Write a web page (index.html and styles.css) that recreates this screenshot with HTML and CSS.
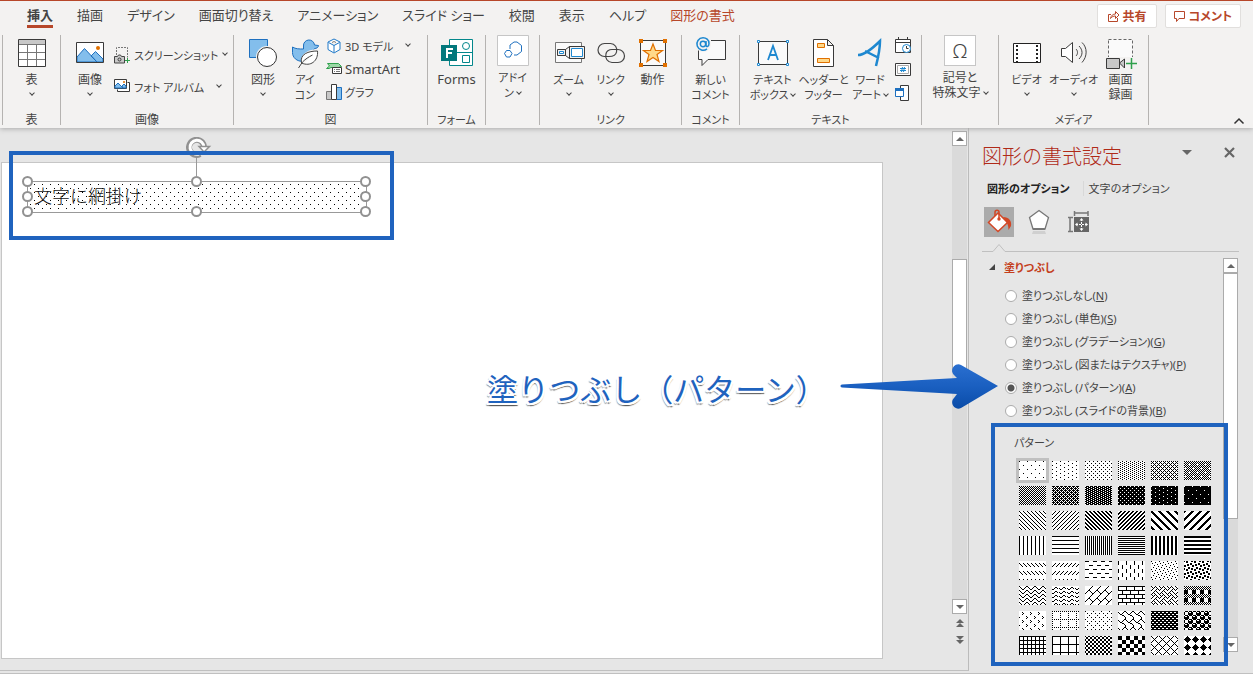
FILE: index.html
```html
<!DOCTYPE html>
<html lang="ja">
<head>
<meta charset="utf-8">
<title>図形の書式設定</title>
<link rel="stylesheet" href="styles.css">
</head>
<body>
<header class="ribbon">
  <div class="tabbar">
    <nav class="tabs">
      <button class="tab tab-active">挿入</button>
      <button class="tab">描画</button>
      <button class="tab">デザイン</button>
      <button class="tab">画面切り替え</button>
      <button class="tab">アニメーション</button>
      <button class="tab">スライド ショー</button>
      <button class="tab">校閲</button>
      <button class="tab">表示</button>
      <button class="tab">ヘルプ</button>
      <button class="tab tab-context">図形の書式</button>
    </nav>
    <div class="actions">
      <button class="action"><svg width="13" height="13" viewBox="0 0 13 13"><path d="M4 4.500H1.500v7h9V8M3.500 8.500c.5-3 2.500-4.500 5-4.500V1.500l3.500 3.500-3.500 3.500V6c-2 0-3.500.5-5 2.500z"/></svg>共有</button>
      <button class="action"><svg width="13" height="13" viewBox="0 0 13 13"><path d="M1.500 1.500h10v7H6l-2.500 3v-3h-2z"/></svg>コメント</button>
    </div>
  </div>

  <div class="groups">
    <section class="group g-table">
      <div class="items">
        <button class="big"><svg class="ico" viewBox="0 0 32 32"><path fill="#fff" d="M2.500 2.500h27v27h-27z"/><path fill="#c8c8c8" d="M3 3h26v4H3z"/><path class="g" d="M3 7.500h26M3 15.500h26M3 22.500h26M11.500 8v21M20.500 8v21"/><path class="k" d="M2.500 2.500h27v27h-27z"/></svg><span>表</span><i class="chev"></i></button>
      </div>
      <h2>表</h2>
    </section>

    <section class="group g-image">
      <div class="items">
        <button class="big"><svg class="ico" viewBox="0 0 32 32"><path fill="#fff" d="M2.500 5.500h27v20h-27z"/><path fill="#83beec" stroke="#1e70bf" d="M3 20l7.500-8.500L23 25H3zM17 19l4.500-4.500L29 22v3h-6z"/><circle cx="24" cy="11" r="2" fill="#e07000"/><path class="k" d="M2.500 5.500h27v20h-27z"/></svg><span>画像</span><i class="chev"></i></button>
        <div class="stack stack-two">
          <button class="small kana"><svg width="17" height="17" viewBox="0 0 17 17"><path class="g" stroke-dasharray="2 1" d="M2.500 8V.500h11v10"/><path fill="#c8c8c8" stroke="#444" d="M.500 9.500h3l1-1.500h2l1 1.500h3v6.500h-10z"/><circle cx="5.500" cy="12.500" r="1.500" class="k"/><path stroke="#2fa04c" d="M11 13.500h5M13.500 11v5"/></svg><span>スクリーンショット</span><i class="chev"></i></button>
          <button class="small kana"><svg width="17" height="17" viewBox="0 0 17 17"><path fill="#fff" class="k" d="M13.500 3.500h2v9h-12v-2"/><path fill="#fff" class="k" d="M.500.500h12v9H.500z"/><path fill="#83beec" stroke="#1e70bf" d="M1 7l3-3 5 5H1zM8 7l2-2 2 2v2H9z"/><circle cx="10" cy="3" r="1" fill="#e07000"/></svg><span>フォト アルバム</span><i class="chev chev-far"></i></button>
        </div>
      </div>
      <h2>画像</h2>
    </section>

    <section class="group g-illust">
      <div class="items">
        <button class="big"><svg class="ico" viewBox="0 0 32 32"><path fill="#83beec" stroke="#1e70bf" d="M2.500 2.500h18v18h-18z"/><circle cx="20" cy="20" r="11" fill="#f3f2f1"/><circle cx="20" cy="20" r="9.500" fill="#fff" stroke="#333"/></svg><span>図形</span><i class="chev"></i></button>
        <button class="big kana"><svg class="ico" viewBox="0 0 32 32"><path fill="#83beec" stroke="#1e70bf" d="M3.500 10c3 2 7 2 11 2V9a5.500 5.500 0 0 1 11-1l4 .5c0 2-2 3-4 3l-3 5-8 8c-7 0-11-4-11-9z"/><path fill="#f3f2f1" d="M30 12c-10 0-19 4-18 14l-2 5h4c9 2 17-4 16-19z"/><path fill="#fff" stroke="#444" d="M28.500 14c-9 0-18 3-16 12 9 4 17-2 16-12zM9.500 31l4-6c3-3 6-5 10-7"/></svg><span>アイ<br>コン</span></button>
        <div class="stack">
          <button class="small kana"><svg width="16" height="16" viewBox="0 0 16 16"><path fill="#fff" stroke="#1e78c8" d="M8 1l6 3v7.500L8 15l-6-3.500V4zM2.500 4.500L8 7.500l5.500-3M8 7.500V14"/><path class="g" d="M6 4.500l2-1 2 1"/></svg><span>3D モデル</span><i class="chev chev-far"></i></button>
          <button class="small latin"><svg width="16" height="16" viewBox="0 0 16 16"><path fill="#9bd8a6" stroke="#2fa04c" d="M1.500 2.500h11l3 3-3 1H5l-2 1H.500l3-2.500z"/><path fill="#fff" class="k" d="M6.500 6.500h9v6h-9z"/><path class="g" d="M8 8.500h1m1 0h4M8 10.500h1m1 0h4"/></svg><span>SmartArt</span></button>
          <button class="small kana"><svg width="16" height="16" viewBox="0 0 16 16"><path fill="#c8c8c8" class="g" d="M.500 7.500h5v8h-5z"/><path fill="#83beec" stroke="#1e70bf" d="M10.500 3.500h5v12h-5z"/><path fill="#fff" class="k" d="M5.500.500h5v15h-5z"/></svg><span>グラフ</span></button>
        </div>
      </div>
      <h2>図</h2>
    </section>

    <section class="group g-forms">
      <div class="items">
        <button class="big latin"><svg class="ico ico-wide" viewBox="0 0 34 32"><path fill="#fff" stroke="#03878b" d="M9.500 2.500h23v26h-23zM9.500 15.500h23"/><circle cx="26" cy="9" r="3.500" fill="none" stroke="#03878b"/><path fill="none" stroke="#03878b" d="M22.500 18.500h7v7h-7z"/><path fill="#03787c" d="M1 8h16v16H1z"/><path stroke="#fff" stroke-width="2" fill="none" d="M7 21v-9h6M7 16h5"/></svg><span>Forms</span></button>
      </div>
      <h2 class="kana">フォーム</h2>
    </section>

    <section class="group g-addin">
      <div class="items">
        <button class="big kana"><svg class="tile" viewBox="0 0 32 31"><path fill="#fff" stroke="#c6c6c6" d="M.500.500h31v30H.500z"/><path fill="none" stroke="#1e70bf" d="M13 14V10l4-3h3l4.500 3.500v6L20 20h-3"/><path fill="none" stroke="#1e70bf" d="M9.500 15.500h3.500l2 3-2 3.500H9.500l-2-3.500z"/></svg><span>アドイ<br>ン <i class="chev"></i></span></button>
      </div>
    </section>

    <section class="group g-link">
      <div class="items">
        <button class="big kana"><svg class="ico" viewBox="0 0 32 32"><path fill="#fafafa" class="g" d="M2.500 5.500h26v20h-26z"/><path fill="#f3f2f1" class="k" d="M4.500 12.500v6h8v-6zM12.500 12.500l4-3v12l-4-3zM16.500 9.500h15v12h-15z"/><path fill="#fff" stroke="#1e88d0" d="M18.500 11.500h11v8h-11z"/><path fill="#fff" stroke="#1e88d0" d="M6.500 14.500h4v2h-4z"/></svg><span>ズーム</span><i class="chev"></i></button>
        <button class="big kana"><svg class="ico" viewBox="0 0 32 32"><g fill="none" stroke="#444" stroke-width="1.200"><path d="M14 19.500H9.500a6.500 6.500 0 0 1 0-13h6a6.500 6.500 0 0 1 6 8.500"/><path d="M17 12.500h6a6.500 6.500 0 0 1 0 13h-6a6.500 6.500 0 0 1-6-8.500M14 19.500c4 0 7-2 7.500-4.500M17 12.500c-3 0-6 2-6 4.500"/></g></svg><span>リンク</span><i class="chev"></i></button>
        <button class="big"><svg class="ico" viewBox="0 0 32 32"><path class="k" fill="#fafafa" d="M3.500 3.500h25v25h-25z"/><path fill="#ffd98a" stroke="#e07000" stroke-width="1.200" d="M16 7l2.500 6.500h7l-5.500 4 2 7-6-4-6 4 2-7-5.500-4h7z"/><path fill="#e07000" d="M2 2h4v4H2zM26 2h4v4h-4zM2 26h4v4H2zM26 26h4v4h-4z"/></svg><span>動作</span></button>
      </div>
      <h2 class="kana">リンク</h2>
    </section>

    <section class="group g-comment">
      <div class="items">
        <button class="big kana"><svg class="ico" viewBox="0 0 32 32"><path fill="#fafafa" class="k" d="M16 3.500h14.500v19H13l-6 6v-6H3.500V12"/><circle cx="8" cy="7" r="8" fill="#f3f2f1"/><circle cx="8" cy="7" r="2.700" fill="none" stroke="#1e88d0" stroke-width="1.500"/><path fill="none" stroke="#1e88d0" stroke-width="1.500" d="M11 4v4.500c.5 2 3 1 3-2C14 2.500 11 .8 8 .8a6.200 6.200 0 1 0 4 11"/></svg><span>新しい<br>コメント</span></button>
      </div>
      <h2 class="kana">コメント</h2>
    </section>

    <section class="group g-text">
      <div class="items">
        <button class="big kana"><svg class="ico" viewBox="0 0 32 32"><path fill="#fafafa" class="k" d="M1.500 4.500h29v23h-29z"/><path fill="none" stroke="#1e88d0" stroke-width="1.800" d="M11 23l5-14 5 14M13 18h6"/><path fill="#fff" stroke="#1e88d0" d="M.500 3.500h2v2h-2zM29.500 3.500h2v2h-2zM.500 26.500h2v2h-2zM29.500 26.500h2v2h-2z"/></svg><span>テキスト<br>ボックス <i class="chev"></i></span></button>
        <button class="big kana"><svg class="ico" viewBox="0 0 32 32"><path fill="#fff" class="k" d="M5.500 2.500h14l6 6v21h-20zM19.500 2.500v6h6"/><path fill="#ffd98a" stroke="#e07000" d="M9.500 6.500h7v4h-7zM9.500 21.500h12v4h-12z"/></svg><span>ヘッダーと<br>フッター</span></button>
        <button class="big kana"><svg class="ico" viewBox="0 0 32 32"><path fill="none" stroke="#1e88d0" stroke-width="2.500" d="M4 18c7 0 15-7 22-14 0 9-2 17-4 25M11 14l14 7"/></svg><span>ワード<br>アート <i class="chev"></i></span></button>
        <div class="stack stack-icons">
          <button class="small" aria-label="日付と時刻"><svg width="17" height="17" viewBox="0 0 17 17"><path fill="#fff" class="k" d="M.500 2.500h15v13H.500zM.500 5.500h15M3.500 0v3M12.500 0v3"/><circle cx="11.500" cy="11.500" r="4" fill="#fff" stroke="#1e88d0"/><path class="k" d="M11.500 9v2.500h2"/></svg></button>
          <button class="small" aria-label="スライド番号"><svg width="17" height="17" viewBox="0 0 17 17"><path fill="#fff" class="k" d="M.500 2.500h15v12H.500z"/><path fill="none" stroke="#aaa" d="M2.500 4.500h11v8h-11z"/><path stroke="#1e88d0" d="M5 7.500h6M5 9.500h6M7.500 6l-1 5M9.500 6l-1 5"/></svg></button>
          <button class="small" aria-label="オブジェクト"><svg width="17" height="17" viewBox="0 0 17 17"><path fill="#fff" class="k" d="M5.500 3V.500h8v15h-8V12"/><path fill="#fff" stroke="#1e70bf" d="M.500 3.500h8v8h-8z"/><path fill="#1e70bf" d="M0 3h9v3H0z"/></svg></button>
        </div>
      </div>
      <h2 class="kana">テキスト</h2>
    </section>

    <section class="group g-symbol">
      <div class="items">
        <button class="big"><span class="tile omega">Ω</span><span>記号と<br>特殊文字 <i class="chev"></i></span></button>
      </div>
    </section>

    <section class="group g-media">
      <div class="items">
        <button class="big kana"><svg class="ico" viewBox="0 0 32 32"><path fill="#fff" stroke="#222" d="M2.500 6.500h27v19h-27z"/><path fill="none" stroke="#222" stroke-width="2" stroke-dasharray="2 2" d="M6 8v17M26 8v17"/></svg><span>ビデオ</span><i class="chev"></i></button>
        <button class="big kana"><svg class="ico" viewBox="0 0 32 32"><path fill="#fff" class="k" d="M3.500 11.500h4l7-6v20l-7-6h-4z"/><path fill="none" stroke="#444" d="M18 12c2 2 2 5 0 7M21 9c4 4 4 9 0 13M24 5.500c5.500 5 5.500 14 0 20"/></svg><span>オーディオ</span><i class="chev"></i></button>
        <button class="big"><svg class="ico" viewBox="0 0 32 32"><path fill="#fafafa" stroke="#666" stroke-dasharray="3 2" d="M3.500 2.500h24v18h-24z"/><path fill="#f3f2f1" d="M0 20h32v12H0z"/><path fill="#c8c8c8" class="k" d="M1.500 21.500h13v10h-13zM14.500 26l5-4v9z"/><path stroke="#2fa04c" stroke-width="1.500" d="M21 26.500h11M26.500 21v11"/></svg><span>画面<br>録画</span></button>
      </div>
      <h2 class="kana">メディア</h2>
    </section>

    <button class="collapse" aria-label="リボンを折りたたむ"><svg width="12" height="8" viewBox="0 0 12 8"><path fill="none" stroke="#333" stroke-width="1.500" d="M1.500 6.500L6 2l4.500 4.500"/></svg></button>
  </div>
</header>

<main class="workspace">
  <div class="canvas">
    <div class="slide">
      <div class="shape">
        <svg class="shape-fill"><defs><pattern id="dots" width="8" height="8" patternUnits="userSpaceOnUse"><path d="M6 2h1v1H6zM2 6h1v1H2z"/></pattern></defs><rect width="100%" height="100%" fill="url(#dots)"/></svg>
        <span class="shape-text">文字に網掛け</span>
        <i class="handle h-tl"></i><i class="handle h-t"></i><i class="handle h-tr"></i>
        <i class="handle h-l"></i><i class="handle h-r"></i>
        <i class="handle h-bl"></i><i class="handle h-b"></i><i class="handle h-br"></i>
        <svg class="rotate" width="26" height="46" viewBox="0 0 26 46"><path stroke="#999" d="M10.500 19v22"/><path fill="none" stroke="#919191" stroke-width="6" d="M14 17a7.500 7.500 0 1 1 4-7"/><path fill="none" stroke="#fff" stroke-width="3" d="M13 17a7 7 0 1 1 5-6.500"/><path fill="#fff" stroke="#919191" stroke-width="1.500" d="M13 9.500h10.500L18 15z"/></svg>
      </div>
    </div>
    <div class="frame frame-shape"></div>
  </div>

  <div class="vscroll">
    <button class="sbtn" aria-label="上へ"><i class="up"></i></button>
    <div class="track"><div class="thumb"></div></div>
    <button class="sbtn" aria-label="下へ"><i class="down"></i></button>
    <button class="page" aria-label="前のスライド"><i class="up"></i><i class="up"></i></button>
    <button class="page" aria-label="次のスライド"><i class="down"></i><i class="down"></i></button>
  </div>

  <aside class="pane">
    <div class="pane-head">
      <h1>図形の書式設定</h1>
      <button class="pane-menu" aria-label="オプション"><i class="down"></i></button>
      <button class="pane-close" aria-label="閉じる"><svg width="11" height="11" viewBox="0 0 11 11"><path stroke="#666" stroke-width="2.200" d="M1 1l9 9M10 1l-9 9"/></svg></button>
    </div>
    <div class="pane-tabs">
      <button class="ptab ptab-active">図形のオプション</button>
      <button class="ptab">文字のオプション</button>
    </div>
    <div class="pane-icons">
      <button class="picon picon-active" aria-label="塗りつぶしと線"><svg width="30" height="30" viewBox="0 0 30 30"><path fill="#fff" stroke="#d24726" stroke-width="1.500" d="M14 6l9.500 9.500-9.500 9-9.500-9z"/><path fill="none" stroke="#d24726" stroke-width="1.500" d="M11 9V5c0-2.500 4-2.500 4 0v7"/><circle cx="15" cy="12" r="1.700" fill="#d24726"/><path fill="#d24726" d="M19 10c6 0 9 4 8 9l-2.500 4c0-5-1.500-8-5.500-13z"/></svg></button>
      <button class="picon" aria-label="効果"><svg width="30" height="30" viewBox="0 0 30 30"><path fill="#fff" stroke="#777" stroke-width="1.300" d="M15 3.500l9.500 7L21 22H9L5.500 10.500z"/><path fill="#777" d="M9 21h12v2H9z"/><path fill="#d0d0d0" d="M9 24h12l1 3H8z"/></svg></button>
      <button class="picon" aria-label="サイズとプロパティ"><svg width="30" height="30" viewBox="0 0 30 30"><path fill="none" stroke="#777" stroke-width="1.500" d="M10 6h14M10.500 4v5M24 4v5M6 11v14M4 10.500h5M4 24.500h5"/><path fill="#666" d="M10 10h15v15H10z"/><path stroke="#fff" fill="none" stroke-dasharray="2 1" d="M17.500 12v11M12 17.500h11"/><path fill="#fff" d="M17.500 11l2 2.500h-4zM17.500 24l2-2.500h-4zM11 17.500l2.500-2v4zM24 17.500l-2.500-2v4z"/></svg></button>
    </div>
    <svg class="notch" width="257" height="10" viewBox="0 0 257 10"><path fill="none" stroke="#c0c0c0" d="M0 8.500h11l6-7 6 7h234"/></svg>
    <div class="pane-body">
      <div class="pane-content">
        <h2 class="section-title"><i class="tri"></i>塗りつぶし</h2>
        <div class="radios">
          <label><input type="radio" name="fill"><span>塗りつぶしなし(<u>N</u>)</span></label>
          <label><input type="radio" name="fill"><span>塗りつぶし (単色)(<u>S</u>)</span></label>
          <label><input type="radio" name="fill"><span>塗りつぶし (グラデーション)(<u>G</u>)</span></label>
          <label><input type="radio" name="fill"><span>塗りつぶし (図またはテクスチャ)(<u>P</u>)</span></label>
          <label><input type="radio" name="fill" checked><span>塗りつぶし (パターン)(<u>A</u>)</span></label>
          <label><input type="radio" name="fill"><span>塗りつぶし (スライドの背景)(<u>B</u>)</span></label>
        </div>
        <div class="patterns">
          <h3>パターン</h3>
          <div class="swatches" id="swatches"></div>
          <div class="frame frame-patterns"></div>
        </div>
      </div>
      <div class="pscroll">
        <button class="sbtn" aria-label="上へ"><i class="up"></i></button>
        <div class="track"><div class="thumb"></div></div>
        <button class="sbtn" aria-label="下へ"><i class="down"></i></button>
      </div>
    </div>
  </aside>

  <p class="callout">塗りつぶし（パターン）</p>
  <svg class="arrow" width="160" height="52" viewBox="0 0 160 52"><defs><linearGradient id="blue" x1="0" y1="0" x2="0" y2="1"><stop offset="0" stop-color="#2a6fd0"/><stop offset=".5" stop-color="#1a5fc0"/><stop offset="1" stop-color="#0a4ca8"/></linearGradient></defs><path fill="url(#blue)" d="M2 21.500L117 15l-3-3c-5-5 1-13 7-10l37 21-37 22c-6 3-12-5-7-10l3-4L2 24.500c-2 0-2-3 0-3z"/></svg>
</main>
<script src="patterns.js"></script>
</body>
</html>
```

FILE: styles.css
```css
* { box-sizing: border-box; }

body {
  margin: 0;
  height: 100vh;
  display: flex;
  flex-direction: column;
  overflow: hidden;
  background: #e6e6e6;
  color: #444;
  font-family: "Noto Sans", "Noto Sans CJK JP", sans-serif;
  font-size: 12px;
  line-height: 15px;
  font-feature-settings: "palt";
}

h1, h2, h3, p { margin: 0; font-weight: 400; }

button {
  border: 0;
  padding: 0;
  background: none;
  color: inherit;
  font: inherit;
  font-feature-settings: inherit;
}

svg { display: block; flex: none; }
.k { stroke: #3a3a3a; }
.g { stroke: #777; }
path.k:not([fill]), path.g:not([fill]), circle.k { fill: none; }

/* Ribbon */
.ribbon {
  position: relative;
  z-index: 1;
  background: #f3f2f1;
  border-top: 1px solid #b7472a;
  box-shadow: 0 1px 5px #aaa;
}
.tabbar {
  display: flex;
  justify-content: space-between;
  padding: 3px 12px 0 27px;
  height: 34px;
}
.tabs { display: flex; gap: 24px; align-items: flex-start; }
.tab {
  height: 24px;
  font-size: 13px;
  line-height: 23px;
  border-bottom: 3px solid transparent;
  white-space: nowrap;
}
.tab-active { font-weight: 700; border-color: #b7472a; }
.tab-context { color: #b7472a; }
.actions { display: flex; gap: 8px; }
.action {
  display: flex;
  align-items: center;
  gap: 3px;
  height: 24px;
  padding: 0 8px 0 7px;
  background: #fff;
  border: 1px solid #e1dfdd;
  border-radius: 2px;
  color: #b7472a;
  font-size: 12px;
  font-weight: 700;
}
.action:first-child { padding: 0 9px; }
.action path { fill: none; stroke: #b7472a; }

.groups { display: flex; height: 93px; padding-left: 2px; }
.group {
  display: flex;
  flex-direction: column;
  flex: none;
  justify-content: space-between;
  height: 90px;
  border-right: 1px solid #b5b3b1;
}
.group:first-child { border-left: 1px solid #b5b3b1; }
.group h2 { text-align: center; font-size: 12px; line-height: 14px; margin-bottom: -2px; }
.items { display: flex; justify-content: center; }
.g-table { width: 59px; }
.g-image { width: 173px; }
.g-image .items { justify-content: flex-start; padding-left: 8px; }
.g-illust { width: 194px; }
.g-illust .items { justify-content: flex-start; padding-left: 8px; }
.g-forms { width: 58px; }
.g-addin { width: 54px; }
.g-link { width: 142px; }
.g-comment { width: 58px; }
.g-text { width: 182px; }
.g-text .items { justify-content: flex-start; padding-left: 7px; }
.g-symbol { width: 77px; }
.g-media { width: 150px; }

.big {
  display: flex;
  flex-direction: column;
  align-items: center;
  width: 42px;
  white-space: nowrap;
}
.kana, .group h2.kana { font-size: 11px; }
.latin { font-size: 13px; }
.ico { width: 32px; height: 32px; margin: 2px 0 3px; }
.ico-wide { width: 34px; }
.tile { width: 32px; height: 31px; margin-bottom: 4px; }
.omega {
  background: #fff;
  border: 1px solid #c6c6c6;
  font-size: 20px;
  font-weight: 300;
  line-height: 29px;
  text-align: center;
}
.chev {
  display: inline-block;
  width: 4px;
  height: 4px;
  border: solid #444;
  border-width: 0 1px 1px 0;
  transform: rotate(45deg);
  vertical-align: 3px;
}
.big > .chev { margin-top: 4px; }
.stack { display: flex; flex-direction: column; gap: 5px; padding-top: 2px; }
.stack-two { gap: 14px; padding: 11px 0 0 3px; }
.stack-icons { padding-left: 4px; gap: 6px; padding-top: 1px; }
.small {
  display: flex;
  align-items: center;
  gap: 3px;
  height: 18px;
  white-space: nowrap;
}
.small .chev { margin: 0 0 4px 2px; }
.small .chev-far { margin-left: 10px; }
.g-text .big { width: 51px; }
.g-text .big:nth-child(3) { width: 42px; }
.g-media .big { width: 47px; }
.collapse { margin-left: auto; align-self: flex-end; padding: 0 8px 3px 0; }

/* Editing area */
.workspace {
  position: relative;
  flex: 1;
  display: flex;
  min-height: 0;
  border-bottom: 1px solid #c0c0c0;
}
.canvas {
  position: relative;
  flex: 1;
  display: flex;
  margin-bottom: 2px;
  padding: 34px 69px 11px 1px;
  border-bottom: 1px solid #c0c0c0;
}
.slide { position: relative; flex: 1; background: #fff; border: 1px solid #c6c6c6; }
.shape {
  position: absolute;
  left: 25px;
  top: 18px;
  width: 340px;
  height: 32px;
  padding-left: 6px;
  border: 1px solid #999;
  color: #111;
  font-size: 18px;
  font-weight: 300;
  line-height: 28px;
}
.shape-fill { position: absolute; inset: 0; width: 100%; height: 100%; }
.shape-text { position: relative; font-feature-settings: normal; }
.handle {
  position: absolute;
  width: 11px;
  height: 11px;
  margin: -6px;
  background: #fff;
  border: 2px solid #919191;
  border-radius: 50%;
}
.h-tl, .h-t, .h-tr { top: 0; }
.h-l, .h-r { top: 50%; }
.h-bl, .h-b, .h-br { top: 100%; }
.h-tl, .h-l, .h-bl { left: 0; }
.h-t, .h-b { left: 50%; }
.h-tr, .h-r, .h-br { left: 100%; }
.rotate { position: absolute; left: 158px; top: -45px; }
.frame { position: absolute; border: 4px solid #1f63be; pointer-events: none; }
.frame-shape { left: 9px; top: 23px; width: 385px; height: 89px; }

/* Scroll bars */
.vscroll {
  display: flex;
  flex-direction: column;
  width: 17px;
  margin-bottom: 2px;
  padding: 3px 1px 22px 0;
  border-right: 1px solid #bbb;
  border-bottom: 1px solid #c0c0c0;
}
.sbtn {
  display: flex;
  align-items: center;
  justify-content: center;
  flex: none;
  height: 15px;
  background: #fff;
  border: 1px solid #ababab;
}
.track { flex: 1; background: #dadada; }
.thumb { background: #fff; border: 1px solid #ababab; }
.vscroll .track { padding-top: 113px; }
.vscroll .thumb { height: 113px; }
.up, .down { display: block; border: 4px solid transparent; }
.up { border-top: 0; border-bottom-color: #666; }
.down { border-bottom: 0; border-top-color: #666; }
.page { display: flex; flex-direction: column; align-items: center; padding-top: 5px; height: 17px; }

/* Format pane */
.pane { width: 284px; padding-left: 13px; display: flex; flex-direction: column; }
.pane-head { display: flex; align-items: flex-start; padding-right: 18px; height: 53px; }
.pane-head h1 {
  flex: 1;
  padding-top: 14px;
  color: #b02a18;
  font-size: 20px;
  font-weight: 300;
  line-height: 30px;
  font-feature-settings: normal;
}
.pane-menu { padding: 22px 32px 0 0; }
.pane-menu .down { border-width: 5px 5px 0; }
.pane-close { padding-top: 19px; }
.pane-tabs { display: flex; gap: 13px; padding-left: 5px; height: 26px; font-size: 11px; }
.ptab { height: 15px; }
.ptab + .ptab { padding-left: 5px; border-left: 1px solid #d8d8d8; }
.ptab-active { color: #222; font-weight: 700; }
.pane-icons { display: flex; gap: 10px; padding-left: 2px; }
.picon { width: 30px; height: 30px; }
.picon-active { background: #ababab; }
.notch { margin-top: 6px; }
.pane-body { display: flex; flex: 1; min-height: 0; padding: 5px 15px 21px 0; }
.pane-content { flex: 1; }
.section-title {
  display: flex;
  align-items: center;
  gap: 9px;
  padding-left: 7px;
  height: 18px;
  color: #c43e1c;
  font-size: 11px;
  font-weight: 700;
}
.tri { border: 3px solid; border-color: transparent #444 #444 transparent; }
.radios { padding: 8px 0 0 23px; font-size: 11px; }
.radios label { display: flex; align-items: center; gap: 5px; height: 23px; white-space: nowrap; }
.radios input {
  appearance: none;
  width: 12px;
  height: 12px;
  margin: 0;
  background: #fff;
  border: 1px solid #ababab;
  border-radius: 50%;
}
.radios input:checked { background: radial-gradient(circle, #555 3px, #fff 4px); }
.patterns { position: relative; padding: 13px 0 0 34px; }
.patterns h3 { font-size: 11px; margin-left: -2px; }
.swatches {
  display: grid;
  grid-template-columns: repeat(6, 33px);
  grid-auto-rows: 25px;
  padding-top: 8px;
}
.swatch { width: 33px; height: 25px; border: 3px solid transparent; }
.swatch svg { background: #fff; shape-rendering: crispEdges; }
.swatch-active { border-color: #c0c0c0; }
.frame-patterns { left: 9px; top: 1px; width: 237px; height: 243px; }
.pscroll { display: flex; flex-direction: column; width: 15px; }
.pscroll .thumb { height: 246px; }

/* Annotation */
.callout {
  position: absolute;
  left: 487px;
  top: 238px;
  color: #1f63be;
  font-family: "Noto Sans CJK JP", sans-serif;
  font-size: 31px;
  font-weight: 400;
  line-height: 44px;
  font-feature-settings: normal;
  white-space: nowrap;
  text-shadow: 2px 0 #fff, -2px 0 #fff, 0 2px #fff, 0 -2px #fff, 2px 2px #fff, -2px 2px #fff, 1px 3px 1px #555, -2px 3px 1px #888;
}
.arrow { position: absolute; left: 840px; top: 235px; }
```

FILE: patterns.js
```js
// Each fill is a repeating 8x8 bitmap, one byte per row, top row first.
const fills = [
  "8000000008000000", "8000080080000800", "8800220088002200", "8822882288228822", "aa44aa11aa44aa11", "aa55aa51aa55aa15",
  "aa55aa55aa55aa55", "ee55bb55ee55bb55", "77dd77dd77dd77dd", "77ffddff77ffddff", "7ffff7ff7ffff7ff", "7ffffffff7ffffff",
  "8844221188442211", "1122448811224488", "cc663399cc663399", "3366cc993366cc99", "c1e070381c0e0783", "c183070e1c3870e0",
  "8888888888888888", "ff000000ff000000", "aaaaaaaaaaaaaaaa", "ff00ff00ff00ff00", "cccccccccccccccc", "ffff0000ffff0000",
  "0000884422110000", "0000112244880000", "f00000000f000000", "8080808008080808", "8008400210012004", "b130031bd8c00c8d",
  "8142241881422418", "001825c0001825c0", "0102040818244281", "ff808080ff080808", "8854224588142251", "aa55aa55f0f0f0f0",
  "0010081000018001", "aa00800080008000", "8000220008002200", "038448300c020101", "ff66ff99ff66ff99", "77898f8f7798f8f8",
  "ff888888ff888888", "ff80808080808080", "9966669999666699", "f0f0f0f00f0f0f0f", "8244281028448201", "10387cfe7c381000"
];

const grid = document.getElementById("swatches");
grid.innerHTML = fills.map((hex, i) => {
  let path = "";
  for (let y = 0; y < 8; y++) {
    const row = parseInt(hex.slice(y * 2, y * 2 + 2), 16);
    for (let x = 0; x < 8; x++) {
      if (row & (128 >> x)) path += `M${x} ${y}h1v1h-1z`;
    }
  }
  return `<button class="swatch${i ? "" : " swatch-active"}" aria-label="パターン ${i + 1}">
    <svg width="27" height="19"><defs><pattern id="fill${i}" width="8" height="8" patternUnits="userSpaceOnUse"><path d="${path}"/></pattern></defs><rect width="27" height="19" fill="url(#fill${i})"/></svg></button>`;
}).join("");
```
